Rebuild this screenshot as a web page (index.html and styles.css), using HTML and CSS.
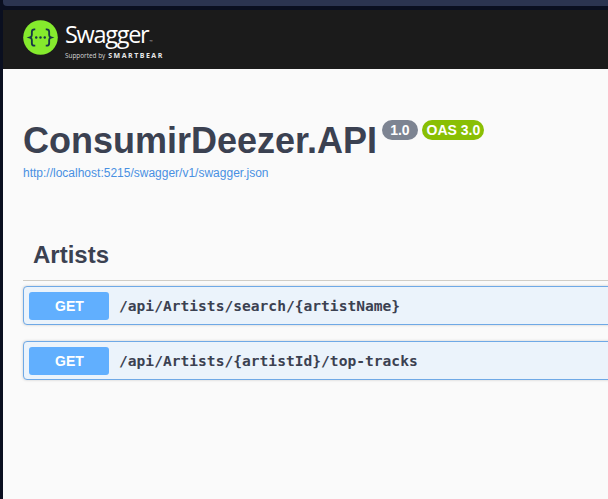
FILE: index.html
```html
<!DOCTYPE html>
<html lang="en">
<head>
<meta charset="utf-8">
<title>Swagger UI</title>
<link rel="stylesheet" href="styles.css">
</head>
<body>
<div class="chrome-top"></div>
<div class="frame">
  <header class="topbar">
    <svg class="logo" width="35" height="35" viewBox="0 0 36 36" aria-hidden="true">
      <circle cx="18" cy="18" r="17.8" fill="#85ea2d"/>
      <path d="M12.6 9.6h-.9c-1.7 0-2.6.9-2.6 2.6v3.2c0 1.4-.6 2.2-2 2.6 1.4.4 2 1.2 2 2.6v3.2c0 1.7.9 2.6 2.6 2.6h.9" fill="none" stroke="#173647" stroke-width="1.9"/>
      <path d="M23.4 9.6h.9c1.7 0 2.6.9 2.6 2.6v3.2c0 1.4.6 2.2 2 2.6-1.4.4-2 1.2-2 2.6v3.2c0 1.7-.9 2.6-2.6 2.6h-.9" fill="none" stroke="#173647" stroke-width="1.9"/>
      <circle cx="13.6" cy="18" r="1.25" fill="#173647"/>
      <circle cx="18" cy="18" r="1.25" fill="#173647"/>
      <circle cx="22.4" cy="18" r="1.25" fill="#173647"/>
    </svg>
    <div class="brand">
      <div class="brand-name">Swagger<span class="tm">™</span></div>
      <div class="brand-sub"><span class="by">Supported by</span><span class="sb">SMARTBEAR</span></div>
    </div>
  </header>
  <main class="page">
    <section class="info">
      <div class="title-row">
        <h1 class="title">ConsumirDeezer.API</h1>
        <span class="badge badge-version">1.0</span>
        <span class="badge badge-oas">OAS 3.0</span>
      </div>
      <a class="spec-link" href="#">http://localhost:5215/swagger/v1/swagger.json</a>
    </section>
    <section class="tag">
      <h2 class="tag-name">Artists</h2>
      <div class="op">
        <span class="method">GET</span>
        <span class="path">/api/Artists/search/{artistName}</span>
      </div>
      <div class="op">
        <span class="method">GET</span>
        <span class="path">/api/Artists/{artistId}/top-tracks</span>
      </div>
    </section>
  </main>
</div>
</body>
</html>
```
FILE: styles.css
```css
* { box-sizing: border-box; }
html, body { margin: 0; height: 100%; }
body {
  background: #0a0f20;
  overflow: hidden;
  font-family: "Liberation Sans", Arial, sans-serif;
}
.chrome-top {
  height: 6px;
  margin-left: 3px;
  background: #2b3450;
  border-bottom-left-radius: 4px;
}
.frame {
  margin: 4px 0 0 3px;
  height: 489px;
  display: flex;
  flex-direction: column;
  background: #fafafa;
}
.topbar {
  height: 59px;
  flex: none;
  background: #1b1b1b;
  display: flex;
  align-items: center;
  gap: 7px;
  padding: 0 0 5px 20px;
}
.logo { flex: none; }
.brand { color: #fff; font-family: "Open Sans", sans-serif; }
.brand-name { font-size: 23.5px; font-weight: 400; line-height: 26px; letter-spacing: -1.3px; margin-top: 6px; }
.tm { font-size: 4px; letter-spacing: 0; margin-left: 1px; color: #bdbdbd; }
.brand-sub { display: flex; align-items: baseline; gap: 3px; line-height: 9px; margin-top: -4px; }
.by { font-size: 6.4px; color: #d8d8d8; }
.sb { font-size: 7px; font-weight: 700; letter-spacing: 1.5px; color: #e8e8e8; }
.page { flex: 1; min-width: 950px; padding: 0 0 0 20px; }
.info { padding-top: 50px; }
.title-row { display: flex; align-items: flex-start; height: 44px; }
.title {
  margin: 0;
  font-size: 36px;
  line-height: 44px;
  font-weight: 700;
  color: #3b4151;
}
.badge {
  margin-top: 1px;
  height: 20px;
  border-radius: 10px;
  color: #fff;
  font-size: 14px;
  font-weight: 700;
  line-height: 20px;
}
.badge-version { margin-left: 5px; background: #7d8492; padding: 0 8px; }
.badge-oas { margin-left: 4px; background: #89bf04; padding: 0 4px 0 5px; }
.spec-link {
  display: block;
  margin-top: 3px;
  font-size: 12px;
  line-height: 14px;
  color: #4990e2;
  text-decoration: none;
}
.tag { margin-top: 55px; }
.tag-name {
  margin: 0;
  padding: 3px 0 7px 10px;
  font-size: 24px;
  line-height: 34px;
  font-weight: 700;
  color: #3b4151;
  border-bottom: 1px solid #d0cdc6;
  height: 46px;
}
.op {
  display: flex;
  align-items: center;
  height: 39px;
  margin-top: 5px;
  padding: 0 5px;
  background: #ebf3fb;
  border: 1px solid #6fa9e6;
  border-radius: 4px;
  margin-bottom: 16px;
  box-shadow: 0 0 3px rgba(0, 0, 0, 0.19);
}
.op + .op { margin-top: 0; }
.method {
  width: 80px;
  height: 28px;
  flex: none;
  padding-left: 1px;
  background: #61affe;
  border-radius: 3px;
  color: #fff;
  font-size: 14px;
  font-weight: 700;
  line-height: 28px;
  text-align: center;
}
.path {
  margin-left: 10px;
  font-family: "DejaVu Sans Mono", monospace;
  font-weight: 700;
  font-size: 14.6px;
  color: #3b4151;
}
```
